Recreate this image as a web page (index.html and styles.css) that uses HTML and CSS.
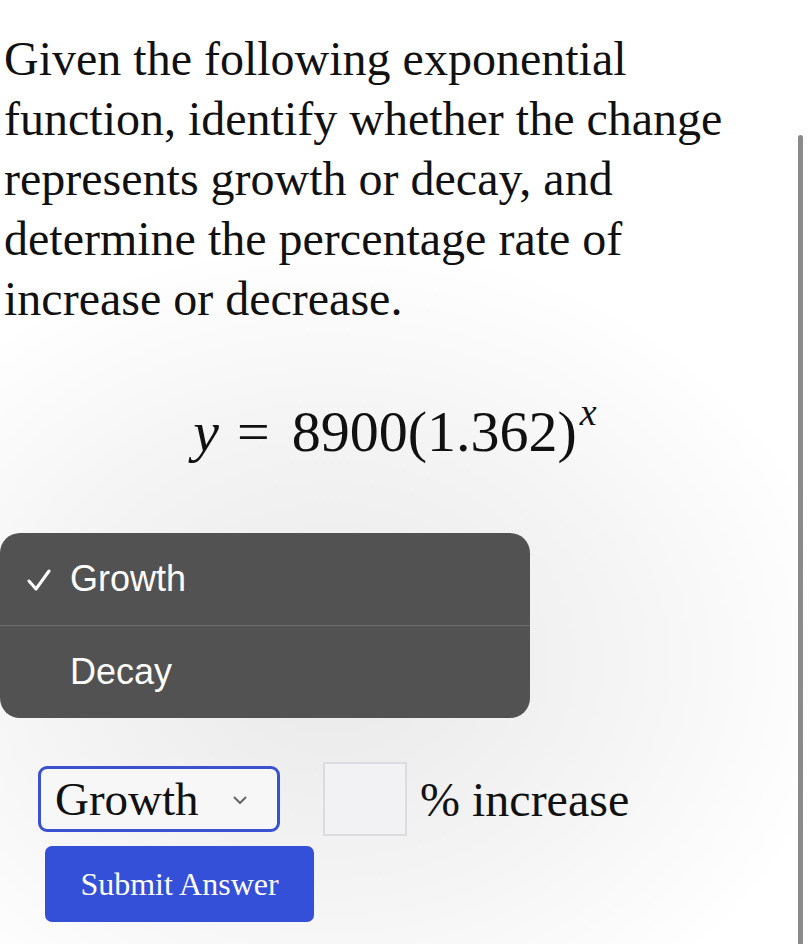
FILE: index.html
```html
<!DOCTYPE html>
<html>
<head>
<meta charset="utf-8">
<link rel="stylesheet" href="styles.css">
</head>
<body>
<div class="page">
  <p class="question">Given the following exponential function, identify whether the change represents growth or decay, and determine the percentage rate of increase or decrease.</p>
  <div class="formula"><span class="var">y</span><span class="eq">=</span><span class="num">8900(1.362)</span><sup class="var sup">x</sup></div>
  <div class="card">
    <div class="menu">
      <div class="menu-item"><svg class="check" width="24" height="22" viewBox="0 0 24 22"><path d="M2 12 L9 20 L22 2" fill="none" stroke="#fff" stroke-width="3" stroke-linecap="round" stroke-linejoin="round"/></svg><span>Growth</span></div>
      <div class="menu-sep"></div>
      <div class="menu-item"><span class="check-space"></span><span>Decay</span></div>
    </div>
    <div class="controls">
      <div class="select"><span>Growth</span>
        <svg class="chev" width="14" height="9" viewBox="0 0 14 9"><path d="M1.5 1.5 L7 7 L12.5 1.5" fill="none" stroke="#666" stroke-width="2" stroke-linecap="round" stroke-linejoin="round"/></svg>
      </div>
      <div class="input"></div>
      <span class="unit">% increase</span>
    </div>
    <button class="submit">Submit Answer</button>
  </div>
  <div class="scrollbar"></div>
</div>
</body>
</html>
```
FILE: styles.css
```css
html, body {
  margin: 0;
  padding: 0;
  background: #ffffff;
}
.page {
  position: relative;
  width: 809px;
  height: 944px;
  overflow: hidden;
  background: radial-gradient(ellipse 520px 420px at 330px 660px, #e9e9ea 0%, #f4f4f5 55%, #ffffff 100%);
  font-family: "Liberation Serif", "Times New Roman", serif;
  color: #111;
}
.question {
  margin: 0;
  padding: 29px 20px 0 4px;
  font-size: 48px;
  line-height: 60px;
  width: 790px;
  box-sizing: border-box;
}
.formula {
  margin-top: 68px;
  text-align: center;
  width: 790px;
  font-size: 58px;
  line-height: 70px;
  color: #111;
}
.var {
  font-style: italic;
}
.eq {
  margin: 0 22px 0 18px;
}
.sup {
  font-size: 38px;
  vertical-align: 26px;
  line-height: 0;
  margin-left: 3px;
}
.card {
  margin-top: 66px;
  width: 790px;
  padding-bottom: 20px;
}
.menu {
  width: 530px;
  background: #525252;
  border-radius: 20px;
  color: #fff;
  font-family: "Liberation Sans", Arial, sans-serif;
  font-size: 36px;
}
.menu-item {
  height: 92px;
  display: flex;
  align-items: center;
  padding-left: 27px;
}
.check {
  margin-right: 19px;
  margin-top: 2px;
}
.check-space {
  display: inline-block;
  width: 43px;
}
.menu-sep {
  height: 1px;
  background: #6e6e6e;
}
.controls {
  display: flex;
  align-items: center;
  margin-top: 44px;
  padding-left: 38px;
}
.select {
  width: 242px;
  height: 66px;
  box-sizing: border-box;
  border: 3px solid #3a52cf;
  border-radius: 9px;
  background: #f7f7f8;
  display: flex;
  align-items: center;
  padding-left: 14px;
  font-size: 47px;
}
.chev {
  margin-left: 34px;
  margin-top: 2px;
}
.input {
  width: 84px;
  height: 74px;
  box-sizing: border-box;
  border: 2px solid #dcdce0;
  background: #f2f2f4;
  margin-left: 43px;
}
.unit {
  margin-left: 13px;
  font-size: 48px;
}
.submit {
  display: block;
  margin: 10px 0 0 45px;
  width: 269px;
  height: 76px;
  border: none;
  border-radius: 7px;
  background: #3550d8;
  color: #fff;
  font-family: "Liberation Serif", "Times New Roman", serif;
  font-size: 32px;
}
.scrollbar {
  position: absolute;
  left: 798px;
  top: 135px;
  width: 5px;
  height: 820px;
  border-radius: 3px;
  background: #8a8a8a;
}
```
